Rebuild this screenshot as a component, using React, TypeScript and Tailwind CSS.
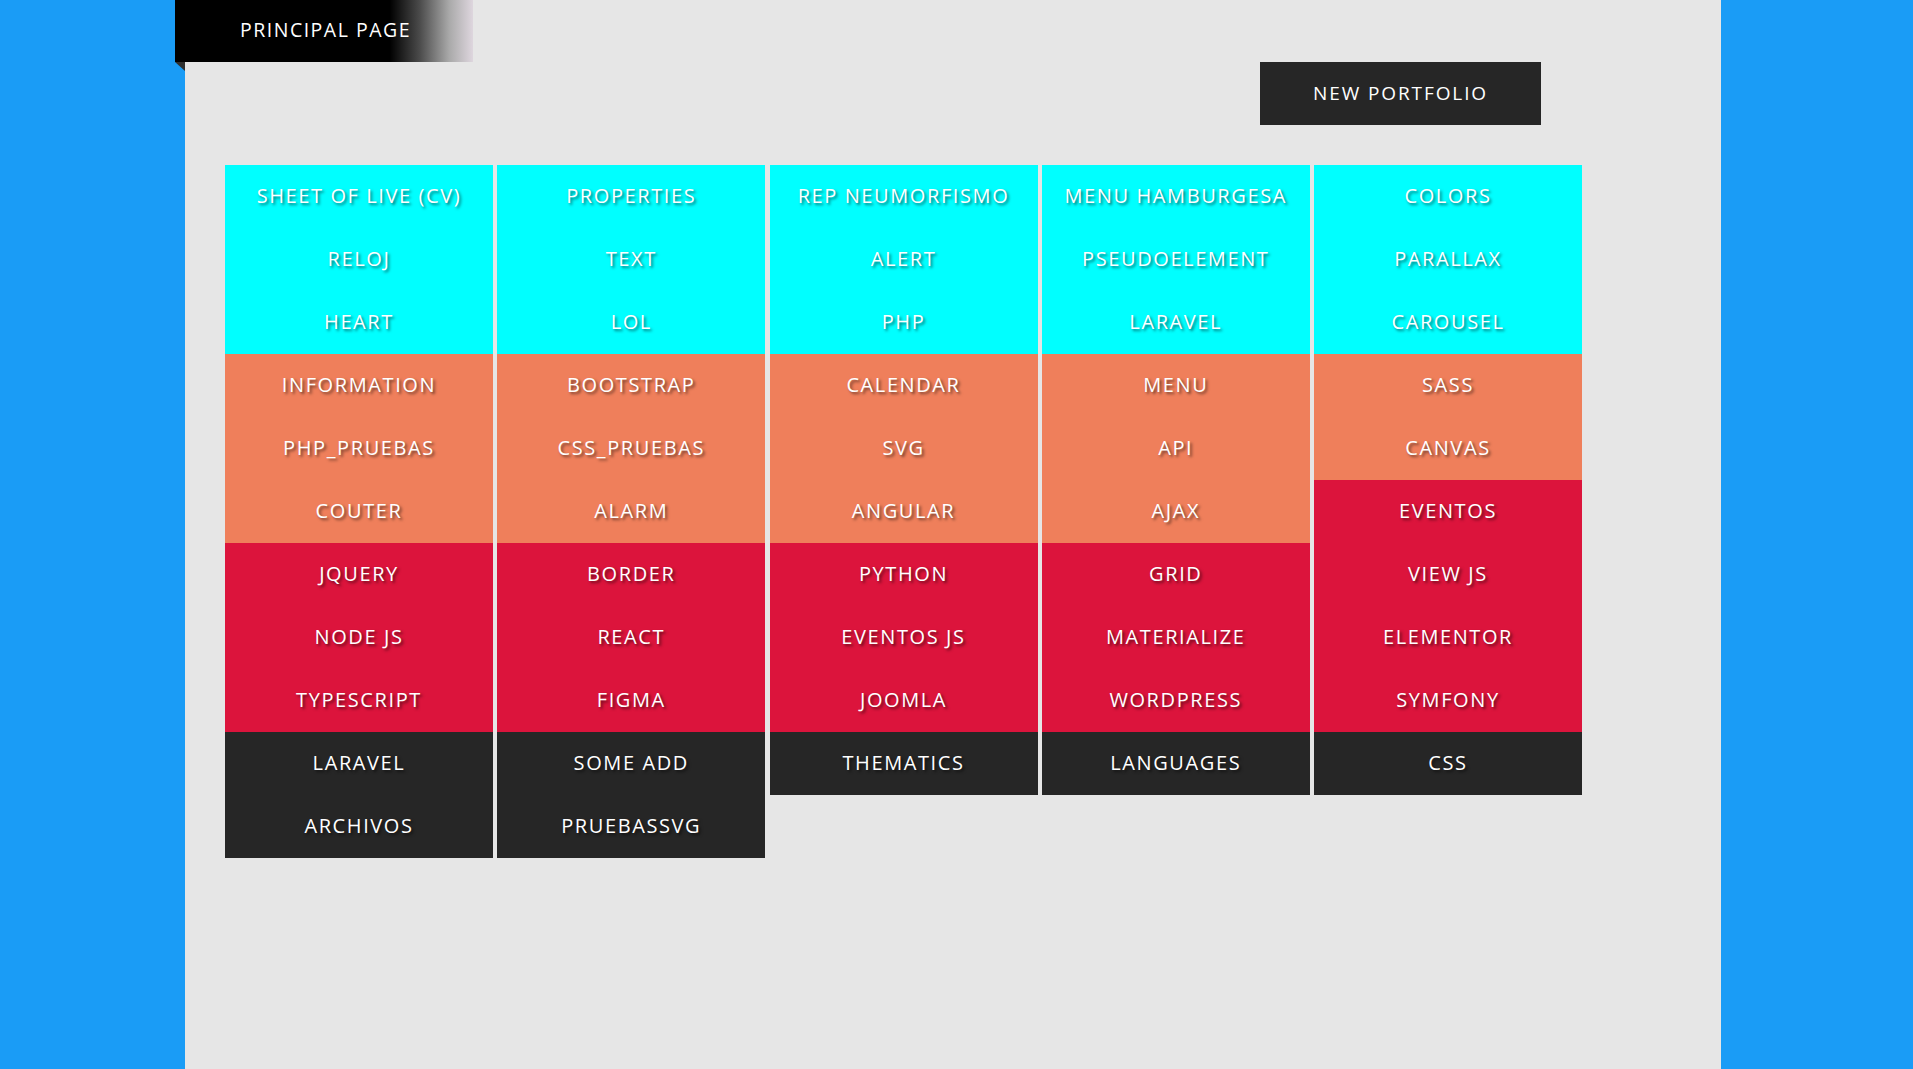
const cyan = "bg-[#00ffff]";
const orange = "bg-[#ef7f5b]";
const red = "bg-[#dc143c]";
const dark = "bg-[#262626]";

type Cell = { label: string; color: string };

function col(groups: [string, string[]][]): Cell[] {
  return groups.flatMap(([color, labels]) => labels.map((label) => ({ label, color })));
}

const columns: Cell[][] = [
  col([
    [cyan, ["SHEET OF LIVE (CV)", "RELOJ", "HEART"]],
    [orange, ["INFORMATION", "PHP_PRUEBAS", "COUTER"]],
    [red, ["JQUERY", "NODE JS", "TYPESCRIPT"]],
    [dark, ["LARAVEL", "ARCHIVOS"]],
  ]),
  col([
    [cyan, ["PROPERTIES", "TEXT", "LOL"]],
    [orange, ["BOOTSTRAP", "CSS_PRUEBAS", "ALARM"]],
    [red, ["BORDER", "REACT", "FIGMA"]],
    [dark, ["SOME ADD", "PRUEBASSVG"]],
  ]),
  col([
    [cyan, ["REP NEUMORFISMO", "ALERT", "PHP"]],
    [orange, ["CALENDAR", "SVG", "ANGULAR"]],
    [red, ["PYTHON", "EVENTOS JS", "JOOMLA"]],
    [dark, ["THEMATICS"]],
  ]),
  col([
    [cyan, ["MENU HAMBURGESA", "PSEUDOELEMENT", "LARAVEL"]],
    [orange, ["MENU", "API", "AJAX"]],
    [red, ["GRID", "MATERIALIZE", "WORDPRESS"]],
    [dark, ["LANGUAGES"]],
  ]),
  col([
    [cyan, ["COLORS", "PARALLAX", "CAROUSEL"]],
    [orange, ["SASS", "CANVAS"]],
    [red, ["EVENTOS", "VIEW JS", "ELEMENTOR", "SYMFONY"]],
    [dark, ["CSS"]],
  ]),
];

export default function App() {
  return (
    <div className="min-h-screen w-full bg-[#1a9cf6] font-['Open_Sans',sans-serif]">
      <div className="relative ml-[185px] min-h-screen w-[1536px] bg-[#e6e6e6]">
        {/* ribbon */}
        <div className="relative -ml-[10px] flex h-[62px] w-[298px] items-center bg-[linear-gradient(to_right,#000_0%,#000_72%,#4a4a4a_82%,#a9a9a9_92%,#ded6de_100%)] pb-[2px] pl-[65px]">
          <span className="text-[19.5px] font-medium tracking-[1.5px] text-white">PRINCIPAL PAGE</span>
          <div className="absolute left-0 top-[62px] h-0 w-0 border-l-[10px] border-t-[9px] border-l-transparent border-t-[#2f2f2f]" />
        </div>

        <div className="flex justify-end pr-[180px]">
          <button className="flex h-[63px] w-[281px] items-center justify-center bg-[#262626] text-[19px] font-medium tracking-[1.9px] text-white">
            NEW PORTFOLIO
          </button>
        </div>

        <div className="mt-[40px] flex items-start gap-[4.25px] pl-[40px]">
          {columns.map((cells, i) => (
            <div key={i} className="flex w-[268px] flex-col">
              {cells.map((c, j) => (
                <a
                  key={j}
                  className={`flex h-[63px] items-center justify-center pb-[2px] text-[20px] font-medium tracking-[1.6px] text-white [text-shadow:2px_2px_3px_rgba(0,0,0,0.55)] ${c.color}`}
                >
                  {c.label}
                </a>
              ))}
            </div>
          ))}
        </div>
      </div>
    </div>
  );
}
